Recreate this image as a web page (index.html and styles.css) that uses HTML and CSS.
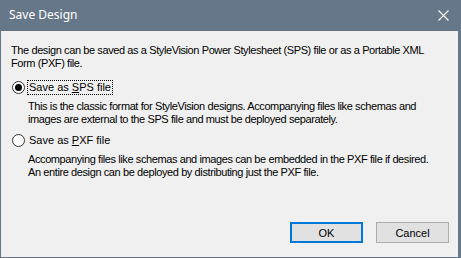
FILE: index.html
```html
<!DOCTYPE html>
<html lang="en">
<head>
    <meta charset="UTF-8">
    <title>Save Design</title>
    <link rel="stylesheet" href="styles.css">
</head>
<body>
    <div class="dialog">
        <div class="titlebar">
            <span class="title">Save Design</span>
            <svg class="close" width="11" height="11" viewBox="0 0 11 11">
                <path d="M0.5 0.5 L10.5 10.5 M10.5 0.5 L0.5 10.5" stroke="#fff" stroke-width="1.1"/>
            </svg>
        </div>
        <div class="content">
            <p class="intro">The design can be saved as a StyleVision Power Stylesheet (SPS) file or as a Portable XML<br>Form (PXF) file.</p>

            <div class="option">
                <span class="radio checked"></span>
                <span class="label focused">Save as <u>S</u>PS file</span>
            </div>
            <p class="desc">This is the classic format for StyleVision designs. Accompanying files like schemas and<br>images are external to the SPS file and must be deployed separately.</p>

            <div class="option">
                <span class="radio"></span>
                <span class="label">Save as <u>P</u>XF file</span>
            </div>
            <p class="desc">Accompanying files like schemas and images can be embedded in the PXF file if desired.<br>An entire design can be deployed by distributing just the PXF file.</p>
        </div>
        <div class="buttons">
            <button class="btn default">OK</button>
            <button class="btn">Cancel</button>
        </div>
    </div>
</body>
</html>
```

FILE: styles.css
```css
*{
    box-sizing: border-box;
}
body{
    margin: 0;
    padding: 0;
    font-family: 'Liberation Sans', Arial, sans-serif;
    font-size: 11px;
    color: #000;
}
.dialog{
    width: 461px;
    height: 258px;
    display: flex;
    flex-direction: column;
    background: #f0f0f0;
    border-left: 1px solid #67778a;
    border-right: 3px solid #67778a;
    border-bottom: 1px solid #67778a;
}
.titlebar{
    height: 31px;
    flex-shrink: 0;
    display: flex;
    align-items: center;
    justify-content: space-between;
    background: #67778a;
    color: #fff;
    padding: 0 9px 2px 8px;
    font-family: 'Noto Sans', sans-serif;
    font-size: 12px;
}
.close{
    margin-top: 1px;
}
.content{
    padding: 13px 10px 0 10px;
    letter-spacing: -0.4px;
    white-space: nowrap;
}
.content p{
    margin: 0;
    line-height: 13px;
}
.option{
    display: flex;
    align-items: center;
    height: 15px;
    margin: 10px 0 5px 1px;
    letter-spacing: 0;
}
.desc + .option{
    margin-top: 7px;
}
.radio{
    width: 13px;
    height: 13px;
    border: 1px solid #333;
    border-radius: 50%;
    background: #fff;
    display: grid;
    place-items: center;
    margin-right: 2px;
}
.radio.checked::after{
    content: "";
    width: 7px;
    height: 7px;
    border-radius: 50%;
    background: #000;
}
.label{
    padding: 0 1px;
    line-height: 13px;
    border: 1px dotted transparent;
}
.label.focused{
    border-color: #000;
}
.desc{
    padding-left: 17px;
}
.buttons{
    margin-top: auto;
    display: flex;
    justify-content: flex-end;
    gap: 13px;
    padding: 0 9px 14px 0;
}
.btn{
    width: 73px;
    height: 21px;
    font-family: 'Liberation Sans', Arial, sans-serif;
    font-size: 11px;
    color: #000;
    background: #e1e1e1;
    border: 1px solid #adadad;
    padding: 0;
}
.btn.default{
    border: 2px solid #0078d7;
}
```
